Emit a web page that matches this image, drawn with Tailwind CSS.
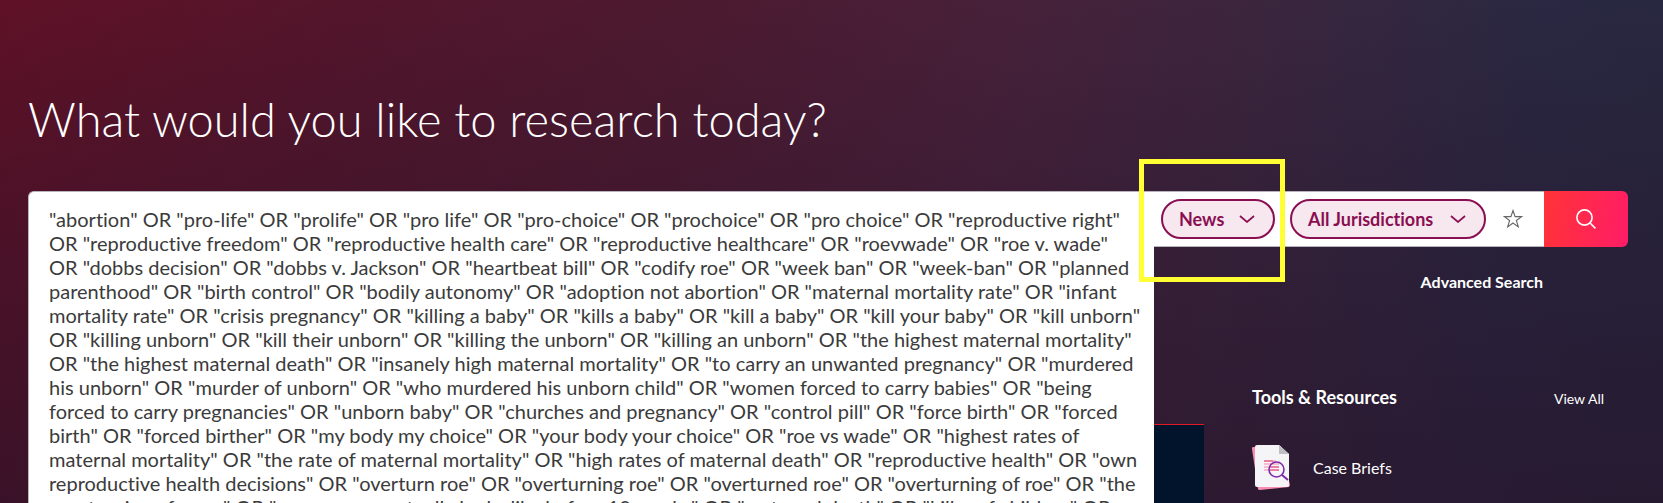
<!DOCTYPE html>
<html lang="en">
<head>
<meta charset="utf-8">
<title>Research</title>
<script src="https://cdn.jsdelivr.net/npm/@tailwindcss/browser@4"></script>
</head>
<body class="h-screen overflow-hidden font-[Lato,sans-serif] [font-variant-ligatures:none] text-white bg-[linear-gradient(180deg,#26122900_0%,#26122940_35%,#261229a0_100%),linear-gradient(100deg,#5f1126_0%,#53152b_20%,#4c1a30_40%,#47213a_58%,#3a263e_73%,#2a2842_88%,#26283f_100%)]">
<main class="px-7 pt-[85px]">
  <h1 class="text-[47px] font-light leading-[68px]">What would you like to research today?</h1>
  <div class="mt-[38px] flex items-start pr-[7px]">
    <textarea aria-label="Search terms" wrap="off" spellcheck="false" class="h-[320px] min-w-0 flex-1 resize-none overflow-hidden rounded-tl-md border-t border-l border-[#b9b4bb] bg-white px-5 pt-[15px] text-xl leading-6 text-[#3b3b3b] outline-none">"abortion" OR "pro-life" OR "prolife" OR "pro life" OR "pro-choice" OR "prochoice" OR "pro choice" OR "reproductive right"
OR "reproductive freedom" OR "reproductive health care" OR "reproductive healthcare" OR "roevwade" OR "roe v. wade"
OR "dobbs decision" OR "dobbs v. Jackson" OR "heartbeat bill" OR "codify roe" OR "week ban" OR "week-ban" OR "planned
parenthood" OR "birth control" OR "bodily autonomy" OR "adoption not abortion" OR "maternal mortality rate" OR "infant
mortality rate" OR "crisis pregnancy" OR "killing a baby" OR "kills a baby" OR "kill a baby" OR "kill your baby" OR "kill unborn"
OR "killing unborn" OR "kill their unborn" OR "killing the unborn" OR "killing an unborn" OR "the highest maternal mortality"
OR "the highest maternal death" OR "insanely high maternal mortality" OR "to carry an unwanted pregnancy" OR "murdered
his unborn" OR "murder of unborn" OR "who murdered his unborn child" OR "women forced to carry babies" OR "being
forced to carry pregnancies" OR "unborn baby" OR "churches and pregnancy" OR "control pill" OR "force birth" OR "forced
birth" OR "forced birther" OR "my body my choice" OR "your body your choice" OR "roe vs wade" OR "highest rates of
maternal mortality" OR "the rate of maternal mortality" OR "high rates of maternal death" OR "reproductive health" OR "own
reproductive health decisions" OR "overturn roe" OR "overturning roe" OR "overturned roe" OR "overturning of roe" OR "the
overturning of rowe" OR "a pregnancy actually looks like before 10 weeks" OR "maternal death" OR "killer of children" OR</textarea>
    <div class="w-[474px] shrink-0">
      <div class="flex h-14">
        <div class="flex flex-1 items-center border-y border-[#b9b4bb] bg-white pl-[7px]">
          <button class="flex h-10 w-[114px] items-center justify-between rounded-full border-2 border-[#8a0f52] bg-[#f7e7ef] pr-[18px] pl-4 text-lg font-bold text-[#8a0f52]">News
            <svg class="h-2 w-4" viewBox="0 0 16 8" fill="none" stroke="currentColor" stroke-width="1.7"><path d="M1 1l7 6 7-6"/></svg>
          </button>
          <button class="ml-[15px] flex h-10 w-[196px] items-center justify-between rounded-full border-2 border-[#8a0f52] bg-[#f7e7ef] pr-[18px] pl-4 text-lg font-bold whitespace-nowrap text-[#8a0f52]">All Jurisdictions
            <svg class="h-2 w-4" viewBox="0 0 16 8" fill="none" stroke="currentColor" stroke-width="1.7"><path d="M1 1l7 6 7-6"/></svg>
          </button>
          <button aria-label="Add to favourites" class="ml-[17px]">
            <svg class="size-5" viewBox="0 0 20 20" fill="none" stroke="#666" stroke-width="1.1"><path d="M10 1.5l2.1 6.1h6.4l-5.1 3.9 1.9 6.4-5.3-3.9-5.3 3.9 1.9-6.4-5.1-3.9h6.4z"/></svg>
          </button>
        </div>
        <button aria-label="Search" class="flex w-[84px] items-center justify-center rounded-r-md bg-linear-[100deg] from-[#ff3337] to-[#ff1d67]">
          <svg class="size-5" viewBox="0 0 20 20" fill="none" stroke="#fff" stroke-width="1.6"><circle cx="8.5" cy="8.5" r="7.6"/><path d="M13.8 13.8l5.6 5.6"/></svg>
        </button>
      </div>
      <div class="flex justify-end pt-[23px] pr-[85px]"><a href="#" class="text-base font-bold leading-6">Advanced Search</a></div>
      <div class="flex pt-[89px]">
        <div class="mt-[41px] h-[100px] w-[50px] border-t border-[#e01b24] bg-[#01142c]"></div>
        <section class="flex-1 pr-6 pl-12">
          <div class="flex items-baseline justify-between">
            <h2 class="text-lg font-bold leading-7">Tools &amp; Resources</h2>
            <a href="#" class="text-sm">View All</a>
          </div>
          <a href="#" class="mt-[34px] flex items-center gap-[21px] text-base">
            <svg class="h-[46px] w-10" viewBox="0 0 40 46"><path d="M0 4q-1-1 1-2l28-1 9 39-1 2L8 45q-2 0-2-1z" fill="#f98eb0"/><path d="M5 0h22l10 9v31q0 2-2 2H5q-2 0-2-2V2q0-2 2-2z" fill="#f5f5f7"/><path d="M27 0l10 9H27z" fill="#bfbfc2"/><path d="M12 16h12M12 19h15M12 22h15M12 25h15" stroke="#f783a7" stroke-width="1"/><path d="M12 16h9M17 22h10M18 25h9" stroke="#e0437c" stroke-width="1"/><circle cx="24.500" cy="24.500" r="7.500" fill="none" stroke="#7c2ba8" stroke-width="1.6"/><path d="M30 30l6 5" stroke="#7c2ba8" stroke-width="2"/></svg>
            Case Briefs
          </a>
        </section>
      </div>
    </div>
  </div>
</main>
<div class="pointer-events-none absolute top-[159px] left-[1139px] h-[123px] w-[146px] border-5 border-[#ffff33]"></div>
</body>
</html>
